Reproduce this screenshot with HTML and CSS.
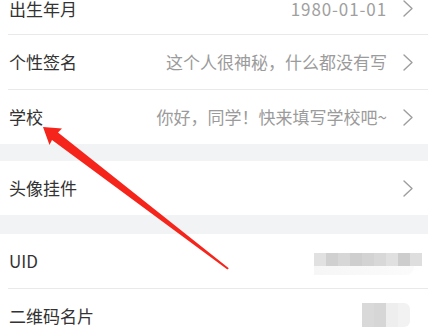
FILE: index.html
```html
<!DOCTYPE html>
<html lang="zh-CN">
<head>
<meta charset="utf-8">
<link rel="stylesheet" href="styles.css">
</head>
<body>
<div class="page">
  <div class="group">
    <div class="row first">
      <span class="label">出生年月</span>
      <span class="value date">1980-01-01</span>
      <svg class="chev" width="10" height="17" viewBox="0 0 10 17"><polyline points="1,1 9,8.5 1,16" /></svg>
    </div>
    <div class="divider"></div>
    <div class="row">
      <span class="label">个性签名</span>
      <span class="value">这个人很神秘，什么都没有写</span>
      <svg class="chev" width="10" height="17" viewBox="0 0 10 17"><polyline points="1,1 9,8.5 1,16" /></svg>
    </div>
    <div class="divider"></div>
    <div class="row">
      <span class="label">学校</span>
      <span class="value">你好，同学！快来填写学校吧~</span>
      <svg class="chev" width="10" height="17" viewBox="0 0 10 17"><polyline points="1,1 9,8.5 1,16" /></svg>
    </div>
  </div>
  <div class="band band-a"></div>
  <div class="group">
    <div class="row">
      <span class="label">头像挂件</span>
      <svg class="chev" width="10" height="17" viewBox="0 0 10 17"><polyline points="1,1 9,8.5 1,16" /></svg>
    </div>
  </div>
  <div class="band band-b"></div>
  <div class="group">
    <div class="row">
      <span class="label">UID</span>
      <div class="mosaic uid">
        <div class="strip">
          <i class="m1"></i><i class="m2"></i><i class="m3"></i><i class="m4"></i><i class="m5"></i><i class="m6"></i><i class="m7"></i><i class="m8"></i><i class="m9"></i>
        </div>
        <div class="smear"></div>
      </div>
    </div>
    <div class="divider"></div>
    <div class="row">
      <span class="label">二维码名片</span>
      <div class="mosaic qr">
        <i class="q1"></i><i class="q2"></i><i class="q3"></i><i class="q4"></i>
      </div>
    </div>
  </div>
</div>
<svg class="arrow" width="428" height="332" viewBox="0 0 428 332">
  <polygon points="43,127 62,128.5 58,132.5 228.8,268.2 227.4,269.6 52,140 49.5,145" />
</svg>
</body>
</html>
```

FILE: styles.css
```css
html, body {
  margin: 0;
  padding: 0;
  background: #ffffff;
}
body {
  width: 428px;
  height: 332px;
  overflow: hidden;
  position: relative;
  font-family: "Noto Sans CJK SC", "Noto Sans", sans-serif;
}
.page {
  margin-top: -17px;
}
.group {
  background: #ffffff;
}
.row {
  height: 54px;
  display: flex;
  align-items: center;
  padding: 0 15px 0 9px;
  box-sizing: border-box;
}
.row.first {
  height: 51px;
}
.label {
  font-size: 17px;
  color: #333333;
  line-height: 24px;
}
.value {
  margin-left: auto;
  font-size: 17px;
  color: #9b9b9b;
  line-height: 24px;
}
.value.date {
  letter-spacing: 0.9px;
  color: #a0a0a0;
}
.chev {
  margin-left: 16px;
  flex: none;
}
.label + .chev {
  margin-left: auto;
}
.chev polyline {
  fill: none;
  stroke: #9e9e9e;
  stroke-width: 1.4;
  stroke-linecap: round;
  stroke-linejoin: round;
}
.divider {
  height: 1px;
  margin-left: 8px;
  background: #e9e9e9;
}
.band {
  background: #f2f3f5;
}
.band-a {
  height: 17px;
}
.band-b {
  height: 19px;
}
.mosaic {
  margin-left: auto;
}
.mosaic.uid {
  margin-right: -9px;
  display: flex;
  flex-direction: column;
  margin-top: 6px;
}
.strip {
  display: flex;
}
.strip i, .mosaic.qr i {
  display: block;
  width: 12px;
}
.strip i {
  height: 13px;
}
.m1 { background: #e1e1e1; }
.m2 { background: #d0d0d0; }
.m3 { background: #d7d7d7; }
.m4 { background: #cecece; }
.m5 { background: #d3d3d3; }
.m6 { background: #d8d8d8; }
.m7 { background: #e0e0e0; }
.m8 { background: #cdcdcd; }
.m9 { background: #dedede; }
.smear {
  height: 9px;
  width: 100px;
  background: linear-gradient(to right, #f6f6f6, #fbfbfb);
  border-radius: 0 0 8px 0;
}
.mosaic.qr {
  display: flex;
  margin-right: 3px;
  margin-top: -2px;
}
.mosaic.qr i {
  height: 24px;
}
.q1 { background: #d9d9d9; }
.q2 { background: #d6d6d6; }
.q3 { background: #eeeeee; }
.q4 { background: #f2f2f2; border-radius: 0 6px 6px 0; }
.arrow {
  position: absolute;
  left: 0;
  top: 0;
  pointer-events: none;
}
.arrow polygon {
  fill: #f5251c;
}
```
